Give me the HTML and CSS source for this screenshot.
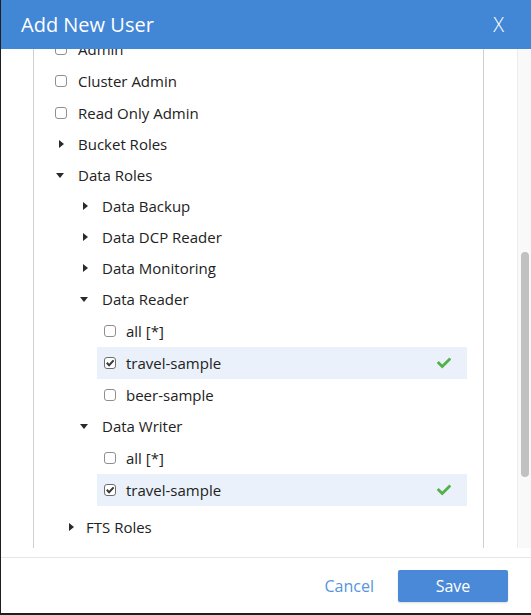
FILE: index.html
```html
<!DOCTYPE html>
<html lang="en">
<head>
<meta charset="utf-8">
<title>Add New User</title>
<link rel="stylesheet" href="styles.css">
</head>
<body>
<div class="modal">
  <div class="modal-header">
    <h1 class="modal-title">Add New User</h1>
    <span class="modal-close">X</span>
  </div>
  <div class="modal-body">
    <div class="scroll-view">
      <div class="roles-box">
        <div class="row row-cb lvl1"><span class="cb"></span><span class="label">Admin</span></div>
        <div class="row row-cb lvl1"><span class="cb"></span><span class="label">Cluster Admin</span></div>
        <div class="row row-cb lvl1"><span class="cb"></span><span class="label">Read Only Admin</span></div>
        <div class="row row-tree lvl1"><span class="tri tri-right"></span><span class="label">Bucket Roles</span></div>
        <div class="row row-tree lvl1"><span class="tri tri-down"></span><span class="label">Data Roles</span></div>
        <div class="row row-tree lvl2"><span class="tri tri-right"></span><span class="label">Data Backup</span></div>
        <div class="row row-tree lvl2"><span class="tri tri-right"></span><span class="label">Data DCP Reader</span></div>
        <div class="row row-tree lvl2"><span class="tri tri-right"></span><span class="label">Data Monitoring</span></div>
        <div class="row row-tree lvl2"><span class="tri tri-down"></span><span class="label">Data Reader</span></div>
        <div class="group">
          <div class="row row-cb lvl3"><span class="cb"></span><span class="label">all [*]</span></div>
          <div class="row row-cb lvl3 selected"><span class="cb cb-checked"><svg width="12" height="12" viewBox="0 0 12 12"><path d="M2.8 5.8 L5.1 8.2 L9.6 3.4" fill="none" stroke="#3a3a3a" stroke-width="2"/></svg></span><span class="label">travel-sample</span><svg class="ok" width="14" height="14" viewBox="0 0 512 512"><path fill="#54b04a" d="M173.898 439.404l-166.4-166.4c-9.997-9.997-9.997-26.206 0-36.204l36.203-36.204c9.997-9.998 26.207-9.998 36.204 0L192 312.69 432.095 72.596c9.997-9.997 26.207-9.997 36.204 0l36.203 36.204c9.997 9.997 9.997 26.206 0 36.204l-294.4 294.401c-9.998 9.997-26.207 9.997-36.204-.001z"/></svg></div>
          <div class="row row-cb lvl3"><span class="cb"></span><span class="label">beer-sample</span></div>
        </div>
        <div class="row row-tree lvl2"><span class="tri tri-down"></span><span class="label">Data Writer</span></div>
        <div class="group group-last">
          <div class="row row-cb lvl3"><span class="cb"></span><span class="label">all [*]</span></div>
          <div class="row row-cb lvl3 selected"><span class="cb cb-checked"><svg width="12" height="12" viewBox="0 0 12 12"><path d="M2.8 5.8 L5.1 8.2 L9.6 3.4" fill="none" stroke="#3a3a3a" stroke-width="2"/></svg></span><span class="label">travel-sample</span><svg class="ok" width="14" height="14" viewBox="0 0 512 512"><path fill="#54b04a" d="M173.898 439.404l-166.4-166.4c-9.997-9.997-9.997-26.206 0-36.204l36.203-36.204c9.997-9.998 26.207-9.998 36.204 0L192 312.69 432.095 72.596c9.997-9.997 26.207-9.997 36.204 0l36.203 36.204c9.997 9.997 9.997 26.206 0 36.204l-294.4 294.401c-9.998 9.997-26.207 9.997-36.204-.001z"/></svg></div>
        </div>
        <div class="row row-tree lvl-fts"><span class="tri tri-right"></span><span class="label">FTS Roles</span></div>
      </div>
    </div>
    <div class="scrollbar"><div class="thumb"></div></div>
  </div>
  <div class="body-gap"></div>
  <div class="modal-footer">
    <a class="btn-link">Cancel</a>
    <button class="btn-primary">Save</button>
  </div>
</div>
</body>
</html>
```
FILE: styles.css
```css
* { box-sizing: border-box; }
html, body { margin: 0; padding: 0; }
body {
  background: #1f1f1f;
  font-family: "Open Sans", "Noto Sans", sans-serif;
  color: #222;
  width: 531px;
  height: 615px;
  overflow: hidden;
}
.modal {
  width: 530px;
  height: 613px;
  margin-left: 1px;
  background: #fff;
  display: flex;
  flex-direction: column;
}
.modal-header {
  height: 49px;
  flex: none;
  background: #4286d6;
  color: #fff;
  display: flex;
  align-items: center;
  justify-content: space-between;
  padding: 0 27px 0 20px;
}
.modal-title {
  margin: 0;
  font-size: 20px;
  font-weight: 400;
  line-height: 1;
}
.modal-close {
  font-size: 20px;
  font-weight: 300;
  line-height: 1;
}
.modal-body {
  height: 499px;
  flex: none;
  display: flex;
  overflow: hidden;
}
.scroll-view {
  flex: 1;
  overflow: hidden;
}
.roles-box {
  margin: -16px 33px 0 32px;
  border-left: 1px solid #d0d0d0;
  border-right: 1px solid #d0d0d0;
  padding-bottom: 40px;
}
.row {
  display: flex;
  align-items: center;
  font-size: 15px;
  line-height: 20px;
}
.row-cb { height: 32px; }
.row-tree { height: 31px; padding-bottom: 1px; }
.lvl1 { padding-left: 21px; }
.lvl2 { padding-left: 45px; }
.lvl3 { padding-left: 7px; }
.lvl-fts { padding-left: 31px; }
.lvl-fts .label { margin-left: 9px; }
.cb {
  width: 12px;
  height: 12px;
  flex: none;
  border: 1px solid #8f8f8f;
  border-radius: 3px;
  background: #fff;
  position: relative;
}
.cb-checked { border-color: #6d6d6d; }
.cb-checked svg {
  position: absolute;
  left: -1px;
  top: -1px;
}
.lvl1 .label, .lvl2 .label { margin-left: 11px; }
.lvl3 .label { margin-left: 10px; }
.tri {
  width: 12px;
  height: 12px;
  flex: none;
  display: flex;
  align-items: center;
  justify-content: center;
}
.tri::before {
  content: "";
  display: block;
  width: 0;
  height: 0;
}
.tri-right::before {
  border-top: 4.5px solid transparent;
  border-bottom: 4.5px solid transparent;
  border-left: 5.5px solid #2a2a2a;
  margin-left: 1px;
}
.tri-down::before {
  border-left: 4.5px solid transparent;
  border-right: 4.5px solid transparent;
  border-top: 5px solid #2a2a2a;
  margin-left: -2px;
}
.group {
  margin: 0 16px 0 63px;
}
.group-last { margin-bottom: 6px; }
.selected { background: #eaf1fa; }
.ok {
  margin-left: auto;
  margin-right: 16px;
  flex: none;
}
.scrollbar {
  width: 14px;
  flex: none;
  background: #f9f9f9;
  border-left: 1px solid #ececec;
  padding: 203px 0 0 3px;
}
.thumb {
  width: 8px;
  height: 225px;
  border-radius: 4px;
  background: #c1c1c1;
}
.body-gap {
  height: 9px;
  flex: none;
}
.modal-footer {
  flex: 1;
  border-top: 1px solid #e6e6e6;
  display: flex;
  justify-content: flex-end;
  align-items: flex-start;
  padding: 12px 23px 0 0;
  gap: 24px;
}
.btn-link {
  color: #5596dc;
  font-size: 16px;
  line-height: 32px;
  cursor: pointer;
}
.btn-primary {
  width: 110px;
  height: 32px;
  border: none;
  border-radius: 2px;
  background: #4a89d8;
  color: #fff;
  font-family: "Open Sans", "Noto Sans", sans-serif;
  font-size: 16px;
  box-shadow: 0 1px 2px rgba(0,0,0,0.15);
}
```
